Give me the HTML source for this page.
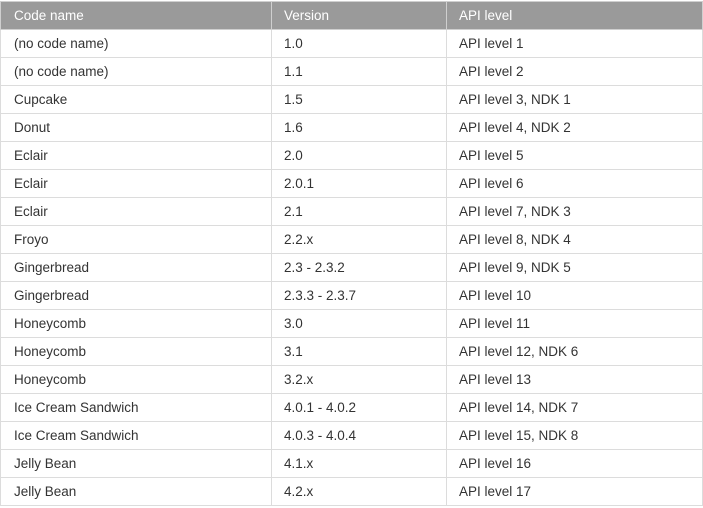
<!DOCTYPE html>
<html><head><style>
html,body{margin:0;padding:0;background:#fff;width:703px;height:508px;overflow:hidden}
table{position:absolute;left:0;top:1px;border-collapse:collapse;font-family:"Liberation Sans",sans-serif;font-size:13.5px;color:#333;table-layout:fixed}
td,th{border:1px solid #dcdcdc;height:27px;padding:0 0 0 12px;text-align:left;font-weight:normal;white-space:nowrap}
td:first-child,th:first-child{padding-left:13px}
th{background:#9a9a9a;color:#fff;border-color:#cfcfcf}
</style></head><body>
<table>
<colgroup><col style="width:271px"><col style="width:175px"><col style="width:256px"></colgroup>
<tr><th>Code name</th><th>Version</th><th>API level</th></tr>
<tr><td>(no code name)</td><td>1.0</td><td>API level 1</td></tr>
<tr><td>(no code name)</td><td>1.1</td><td>API level 2</td></tr>
<tr><td>Cupcake</td><td>1.5</td><td>API level 3, NDK 1</td></tr>
<tr><td>Donut</td><td>1.6</td><td>API level 4, NDK 2</td></tr>
<tr><td>Eclair</td><td>2.0</td><td>API level 5</td></tr>
<tr><td>Eclair</td><td>2.0.1</td><td>API level 6</td></tr>
<tr><td>Eclair</td><td>2.1</td><td>API level 7, NDK 3</td></tr>
<tr><td>Froyo</td><td>2.2.x</td><td>API level 8, NDK 4</td></tr>
<tr><td>Gingerbread</td><td>2.3 - 2.3.2</td><td>API level 9, NDK 5</td></tr>
<tr><td>Gingerbread</td><td>2.3.3 - 2.3.7</td><td>API level 10</td></tr>
<tr><td>Honeycomb</td><td>3.0</td><td>API level 11</td></tr>
<tr><td>Honeycomb</td><td>3.1</td><td>API level 12, NDK 6</td></tr>
<tr><td>Honeycomb</td><td>3.2.x</td><td>API level 13</td></tr>
<tr><td>Ice Cream Sandwich</td><td>4.0.1 - 4.0.2</td><td>API level 14, NDK 7</td></tr>
<tr><td>Ice Cream Sandwich</td><td>4.0.3 - 4.0.4</td><td>API level 15, NDK 8</td></tr>
<tr><td>Jelly Bean</td><td>4.1.x</td><td>API level 16</td></tr>
<tr><td>Jelly Bean</td><td>4.2.x</td><td>API level 17</td></tr>
</table>
</body></html>
